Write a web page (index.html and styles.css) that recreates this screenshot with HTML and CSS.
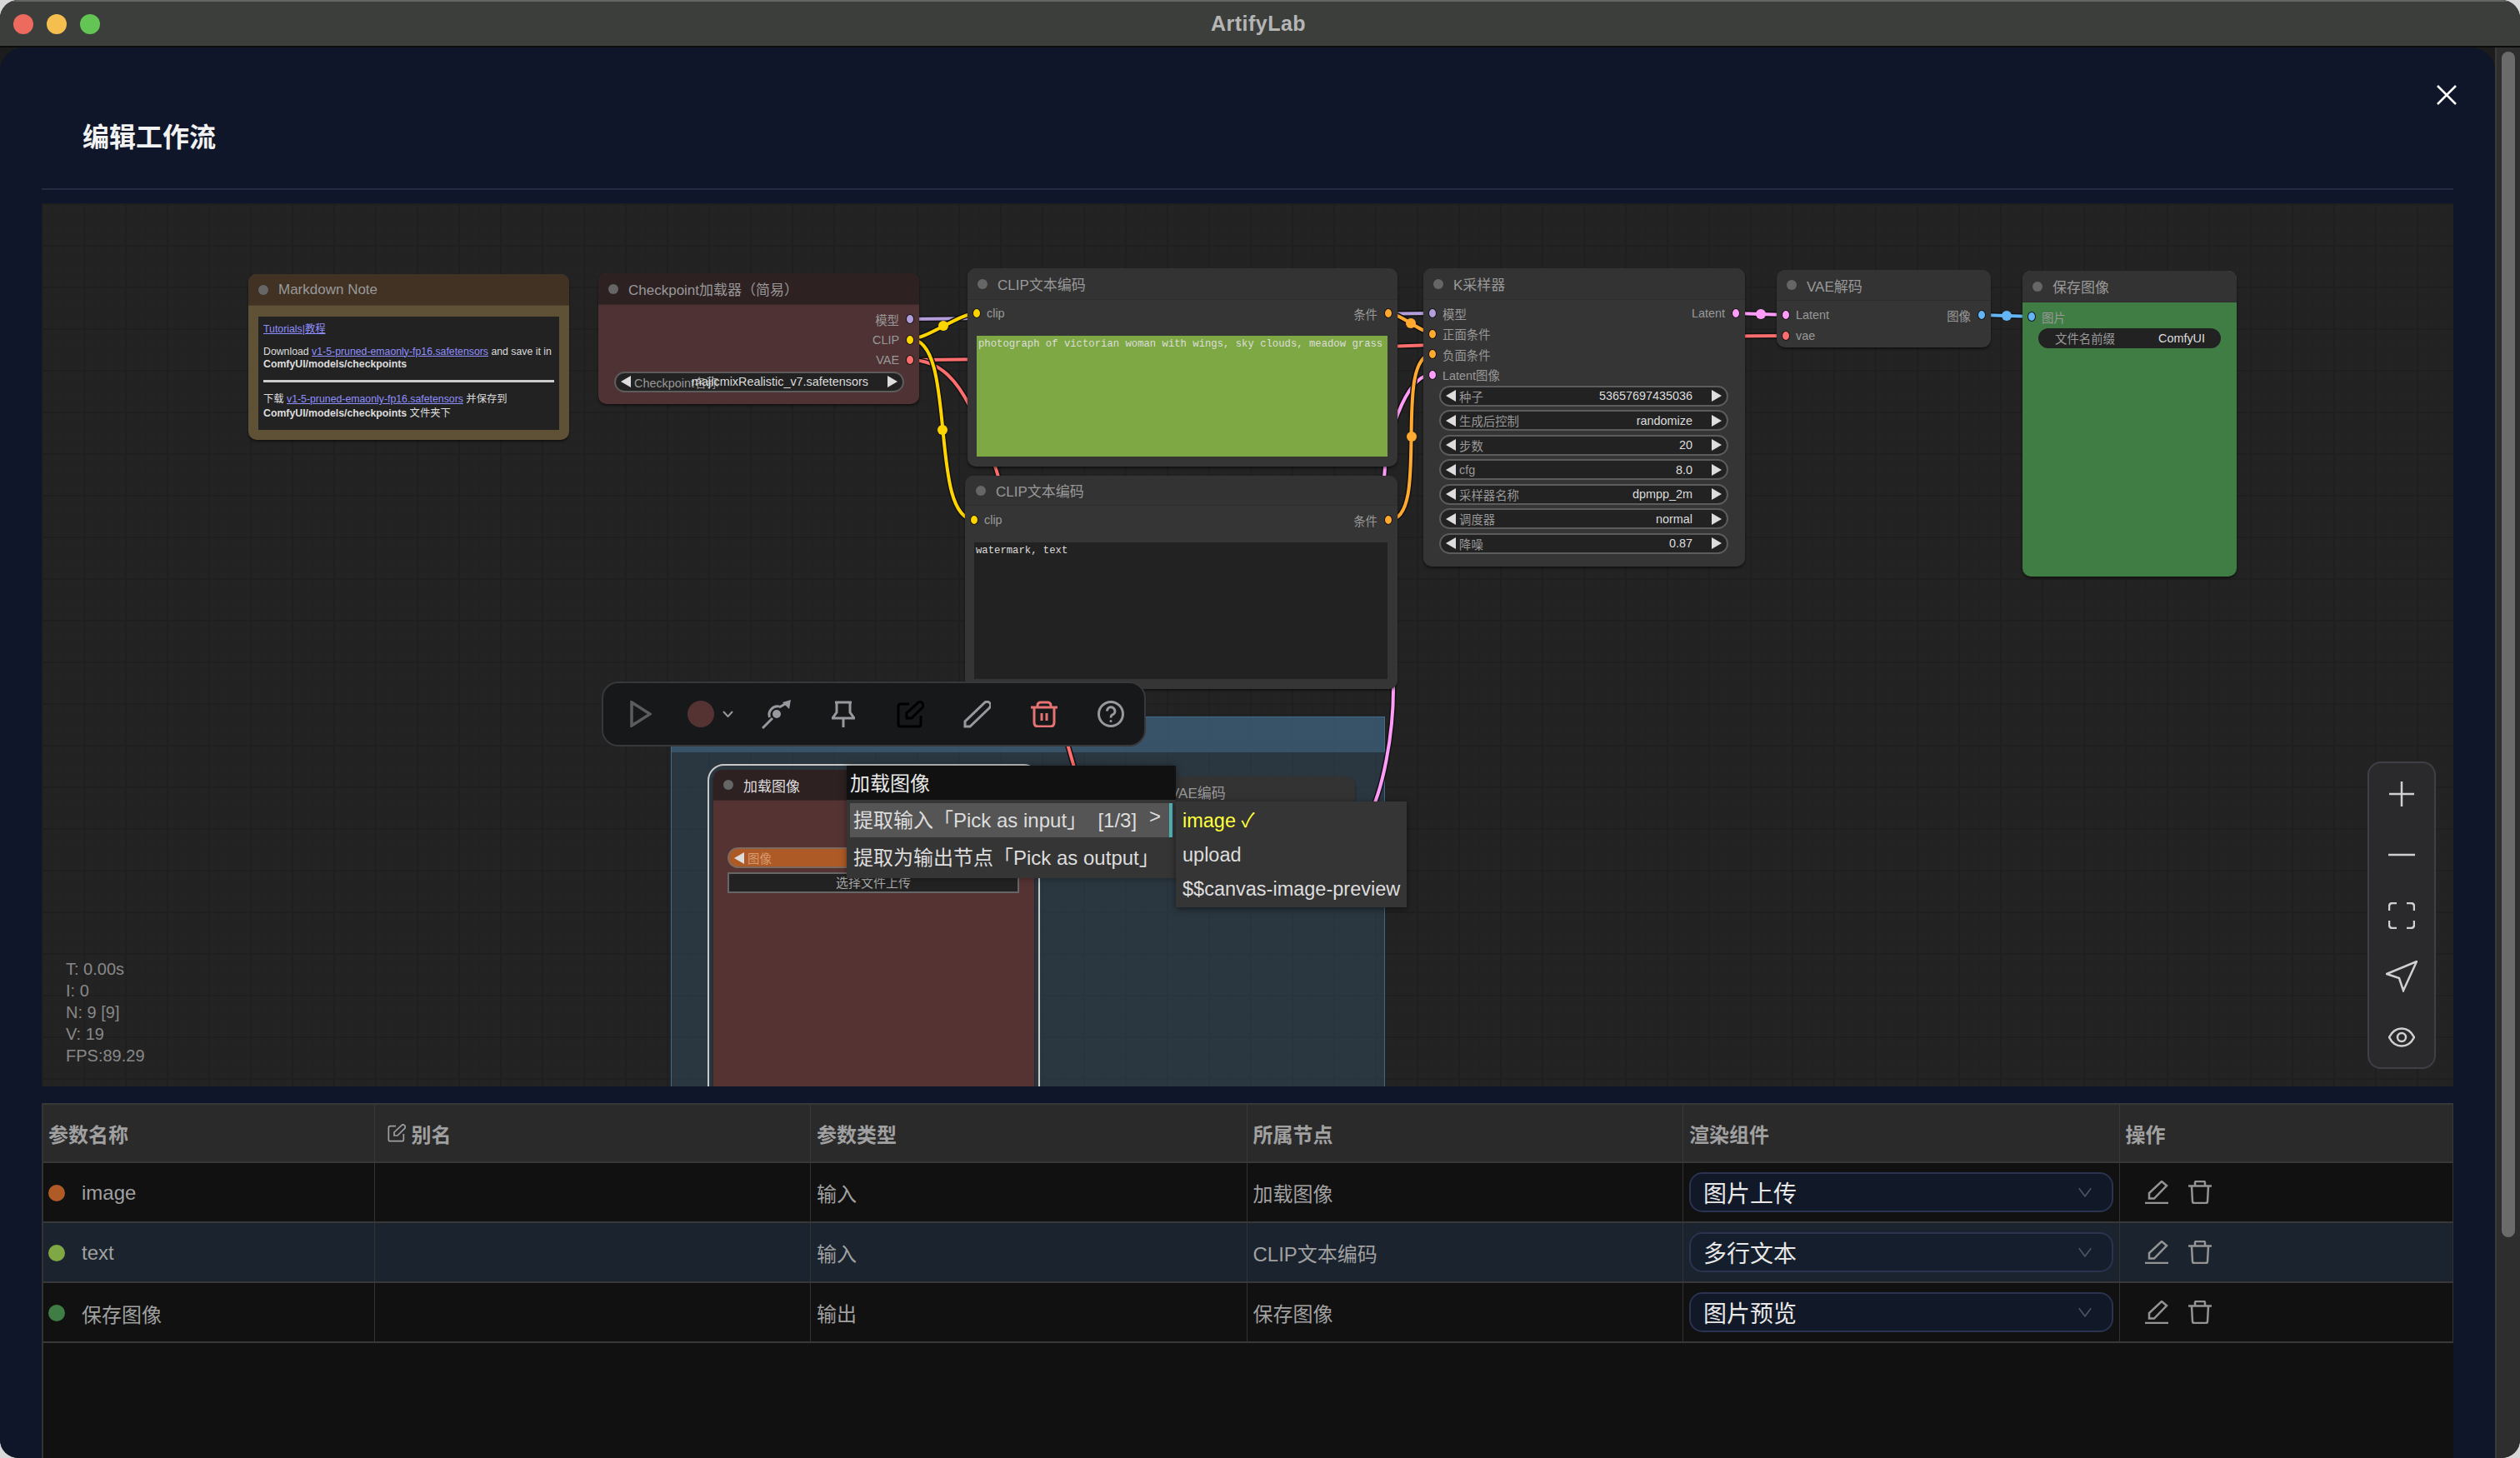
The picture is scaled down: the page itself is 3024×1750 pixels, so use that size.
FILE: index.html
```html
<!DOCTYPE html>
<html lang="zh-CN">
<head>
    <meta charset="UTF-8">
    <meta name="viewport" content="width=device-width, initial-scale=1.0">
    <title>ArtifyLab</title>
    <link rel="stylesheet" href="styles.css">
</head>
<body>
    <svg class="icon-defs" width="0" height="0">
        <symbol id="i-edit" viewBox="0 0 33 33">
            <path d="M15 4H5Q2 4 2 7V28Q2 31 5 31H26Q29 31 29 28V18"/>
            <path d="M12 21V15L26 2Q28 0 31 3Q33 6 31 8L18 21Z"/>
        </symbol>
        <symbol id="i-pen-line" viewBox="0 0 28 28">
            <path d="M5 21.5V15L20 1L26 6L11 21.5Z"/>
            <path d="M0 27H28"/>
        </symbol>
        <symbol id="i-bin" viewBox="0 0 28 28">
            <path d="M0 6.5H28"/>
            <path d="M8 6V2.5Q8 1 9.500 1H18.500Q20 1 20 2.500V6"/>
            <path d="M4 7L5 25Q5 27 7 27H21Q23 27 23 25L24 7"/>
        </symbol>
        <symbol id="i-chevron" viewBox="0 0 20 14">
            <path d="M1 1L10 13L19 1"/>
        </symbol>
    </svg>

    <div class="window">
        <div class="titlebar">
            <div class="lights">
                <span class="light light-red"></span>
                <span class="light light-yellow"></span>
                <span class="light light-green"></span>
            </div>
            <div class="app-name">ArtifyLab</div>
        </div>

        <div class="main">
            <div class="modal">
                <div class="modal-head">
                    <h2>编辑工作流</h2>
                </div>
                <svg class="close" viewBox="0 0 24 24"><path d="M1 1L23 23M23 1L1 23"/></svg>

                <div class="canvas">
                    <div class="group"><div class="group-head"></div></div>

                    <!-- links, in page coordinates -->
                    <svg class="links" width="2894" height="1060" viewBox="50 244 2894 1060">
                        <path class="wire-bg" d="M1092 383C1250 383 1560 376 1720 376"/>
                        <path class="wire w-model" d="M1092 383C1250 383 1560 376 1720 376"/>
                        <path class="wire-bg" d="M1092 432C1355 432 1881 403 2144 403"/>
                        <path class="wire w-vae" d="M1092 432C1355 432 1881 403 2144 403"/>
                        <path class="wire-bg" d="M1092 432C1130 432 1150 460 1165 490C1190 540 1200 570 1225 680C1250 790 1275 870 1300 960"/>
                        <path class="wire w-vae" d="M1092 432C1130 432 1150 460 1165 490C1190 540 1200 570 1225 680C1250 790 1275 870 1300 960"/>
                        <path class="wire-bg" d="M1092 407C1113 407 1151 376 1172 376"/>
                        <path class="wire w-clip" d="M1092 407C1113 407 1151 376 1172 376"/>
                        <path class="wire-bg" d="M1092 407C1150 407 1113 624 1170 624"/>
                        <path class="wire w-clip" d="M1092 407C1150 407 1113 624 1170 624"/>
                        <path class="wire-bg" d="M1666 376C1681 376 1705 400 1720 400"/>
                        <path class="wire w-cond" d="M1666 376C1681 376 1705 400 1720 400"/>
                        <path class="wire-bg" d="M1640 985C1660 950 1672 880 1672 827C1672 720 1655 640 1662 561C1668 510 1690 449 1720 449"/>
                        <path class="wire w-latent" d="M1640 985C1660 950 1672 880 1672 827C1672 720 1655 640 1662 561C1668 510 1690 449 1720 449"/>
                        <path class="wire-bg" d="M1667 624C1718 624 1669 425 1720 425"/>
                        <path class="wire w-cond" d="M1667 624C1718 624 1669 425 1720 425"/>
                        <path class="wire-bg" d="M2082 376L2144 378"/>
                        <path class="wire w-latent" d="M2082 376L2144 378"/>
                        <path class="wire-bg" d="M2377 378L2440 380"/>
                        <path class="wire w-image" d="M2377 378L2440 380"/>
                        <circle class="mid m-clip" cx="1132" cy="391" r="6"/>
                        <circle class="mid m-clip" cx="1131" cy="516" r="6"/>
                        <circle class="mid m-cond" cx="1693" cy="388" r="6"/>
                        <circle class="mid m-cond" cx="1694" cy="524" r="6"/>
                        <circle class="mid m-latent" cx="2113" cy="377" r="6"/>
                        <circle class="mid m-image" cx="2408" cy="379" r="6"/>
                    </svg>

                    <div class="node node-note">
                        <div class="node-title"><i></i>Markdown Note</div>
                        <div class="note-text">
                            <p><a>Tutorials</a><a class="plain">|</a><a>教程</a></p>
                            <p>Download <a>v1-5-pruned-emaonly-fp16.safetensors</a> and save it in<br><b>ComfyUI/models/checkpoints</b></p>
                            <hr>
                            <p class="tall">下载 <a>v1-5-pruned-emaonly-fp16.safetensors</a> 并保存到<br><b>ComfyUI/models/checkpoints</b> 文件夹下</p>
                        </div>
                    </div>

                    <div class="node node-ckpt">
                        <div class="node-title"><i></i>Checkpoint加载器（简易）</div>
                        <div class="node-body">
                            <div class="slot out">模型<u class="c-model"></u></div>
                            <div class="slot out">CLIP<u class="c-clip"></u></div>
                            <div class="slot out">VAE<u class="c-vae"></u></div>
                            <div class="widget ckpt-widget"><s class="al"></s><span class="overlap">Checkpoint名称</span><em>majicmixRealistic_v7.safetensors</em><s class="ar"></s></div>
                        </div>
                    </div>

                    <div class="node node-clip1">
                        <div class="node-title"><i></i>CLIP文本编码</div>
                        <div class="node-body">
                            <div class="slot"><u class="c-clip"></u>clip<span class="right">条件<u class="c-cond"></u></span></div>
                            <div class="prompt prompt-green">photograph of victorian woman with wings, sky clouds, meadow grass</div>
                        </div>
                    </div>

                    <div class="node node-clip2">
                        <div class="node-title"><i></i>CLIP文本编码</div>
                        <div class="node-body">
                            <div class="slot"><u class="c-clip"></u>clip<span class="right">条件<u class="c-cond"></u></span></div>
                            <div class="prompt prompt-dark">watermark, text</div>
                        </div>
                    </div>

                    <div class="node node-sampler">
                        <div class="node-title"><i></i>K采样器</div>
                        <div class="node-body">
                            <div class="slot"><u class="c-model"></u>模型<span class="right">Latent<u class="c-latent"></u></span></div>
                            <div class="slot"><u class="c-cond"></u>正面条件</div>
                            <div class="slot"><u class="c-cond"></u>负面条件</div>
                            <div class="slot"><u class="c-latent"></u>Latent图像</div>
                            <div class="widget-list">
                                <div class="widget"><s class="al"></s><span>种子</span><em>53657697435036</em><s class="ar"></s></div>
                                <div class="widget"><s class="al"></s><span>生成后控制</span><em>randomize</em><s class="ar"></s></div>
                                <div class="widget"><s class="al"></s><span>步数</span><em>20</em><s class="ar"></s></div>
                                <div class="widget"><s class="al"></s><span>cfg</span><em>8.0</em><s class="ar"></s></div>
                                <div class="widget"><s class="al"></s><span>采样器名称</span><em>dpmpp_2m</em><s class="ar"></s></div>
                                <div class="widget"><s class="al"></s><span>调度器</span><em>normal</em><s class="ar"></s></div>
                                <div class="widget"><s class="al"></s><span>降噪</span><em>0.87</em><s class="ar"></s></div>
                            </div>
                        </div>
                    </div>

                    <div class="node node-decode">
                        <div class="node-title"><i></i>VAE解码</div>
                        <div class="node-body">
                            <div class="slot"><u class="c-latent"></u>Latent<span class="right">图像<u class="c-image"></u></span></div>
                            <div class="slot"><u class="c-vae"></u>vae</div>
                        </div>
                    </div>

                    <div class="node node-save">
                        <div class="node-title"><i></i>保存图像</div>
                        <div class="node-body">
                            <div class="slot"><u class="c-image"></u>图片</div>
                            <div class="widget save-widget"><span>文件名前缀</span><em>ComfyUI</em></div>
                        </div>
                    </div>

                    <div class="node node-encode">
                        <div class="node-title"><i></i>VAE编码</div>
                    </div>

                    <div class="node-outline">
                        <div class="node node-load">
                            <div class="node-title"><i></i>加载图像</div>
                            <div class="node-body">
                                <div class="widget image-widget"><s class="al"></s><span>图像</span></div>
                                <div class="upload-btn">选择文件上传</div>
                            </div>
                        </div>
                    </div>

                    <div class="stats">
                        <div>T: 0.00s</div>
                        <div>I: 0</div>
                        <div>N: 9 [9]</div>
                        <div>V: 19</div>
                        <div>FPS:89.29</div>
                    </div>

                    <div class="toolbar">
                        <div class="tool tool-play"><svg width="26" height="32" viewBox="0 0 26 32" class="tool-off"><path d="M2 2L24 16L2 30Z"/></svg></div>
                        <div class="tool tool-color"><span class="swatch"></span><svg width="13" height="8" viewBox="0 0 13 8"><path d="M1 1L6.500 7L12 1"/></svg></div>
                        <div class="tool"><svg width="36" height="35" viewBox="0 0 36 35"><path d="M1 34L13 22"/><path d="M9.500 21A10 10 0 0 1 21 8"/><path d="M21 9L28 5"/><circle class="fill" cx="18" cy="17" r="5"/><path class="fill" d="M35 0L33 11L25 3Z"/></svg></div>
                        <div class="tool"><svg width="28" height="33" viewBox="0 0 28 33"><path d="M4 2H24M6 2V14L1 21H27L22 14V2M14 21V32"/></svg></div>
                        <div class="tool"><svg width="33" height="33"><use href="#i-edit"/></svg></div>
                        <div class="tool"><svg width="33" height="33" viewBox="0 0 33 33"><path d="M2 31V25L26 2Q29 0 32 3Q34 6 31 9L8 31Z"/></svg></div>
                        <div class="tool tool-red"><svg width="32" height="32" viewBox="0 0 32 32"><path d="M0 8H32M8 8V6Q8 2 12 2H20Q24 2 24 6V8M4 8V26Q4 31 9 31H23Q28 31 28 26V8M13 15V24M19 15V24"/></svg></div>
                        <div class="tool"><svg width="32" height="32" viewBox="0 0 32 32"><circle cx="16" cy="16" r="14.500"/><path d="M11.500 12.500A4.700 4.700 0 1 1 17.500 17Q16 18 16 20.500"/><circle class="fill" cx="16" cy="24.500" r="1.500"/></svg></div>
                    </div>

                    <div class="menu">
                        <div class="menu-title">加载图像</div>
                        <div class="menu-item active"><span class="keep-space">提取输入「Pick as input」  [1/3]</span><span class="more">&gt;</span></div>
                        <div class="menu-item">提取为输出节点「Pick as output」</div>
                    </div>
                    <div class="submenu">
                        <div class="sub-item checked">image ✓</div>
                        <div class="sub-item">upload</div>
                        <div class="sub-item">$$canvas-image-preview</div>
                    </div>

                    <div class="zoom-panel">
                        <svg width="30" height="30" viewBox="0 0 30 30"><path d="M0 15H30M15 0V30"/></svg>
                        <svg width="32" height="4" viewBox="0 0 32 4"><path d="M0 2H32"/></svg>
                        <svg width="32" height="32" viewBox="0 0 32 32"><path d="M10 1H5Q1 1 1 5V10M22 1H27Q31 1 31 5V10M1 22V27Q1 31 5 31H10M31 22V27Q31 31 27 31H22"/></svg>
                        <svg width="38" height="38" viewBox="0 0 38 38"><path d="M1 16L37 1L21 36L16 21Z"/></svg>
                        <svg width="32" height="26" viewBox="0 0 32 26"><path d="M1 13C8 -1 24 -1 31 13C24 27 8 27 1 13Z"/><circle cx="16" cy="13" r="5"/></svg>
                    </div>
                </div>

                <div class="table-wrap">
                    <table class="params">
                        <colgroup>
                            <col class="col-name"><col class="col-wide"><col class="col-wide"><col class="col-wide"><col class="col-wide"><col>
                        </colgroup>
                        <thead>
                            <tr>
                                <th>参数名称</th>
                                <th><span class="alias"><svg width="22" height="22"><use href="#i-edit"/></svg>别名</span></th>
                                <th>参数类型</th>
                                <th>所属节点</th>
                                <th>渲染组件</th>
                                <th>操作</th>
                            </tr>
                        </thead>
                        <tbody>
                            <tr>
                                <td><span class="param"><span class="dot dot-orange"></span>image</span></td>
                                <td></td>
                                <td>输入</td>
                                <td>加载图像</td>
                                <td><div class="select"><span>图片上传</span><svg width="16" height="14"><use href="#i-chevron"/></svg></div></td>
                                <td><div class="actions"><svg width="28" height="28"><use href="#i-pen-line"/></svg><svg width="28" height="28"><use href="#i-bin"/></svg></div></td>
                            </tr>
                            <tr class="row-hover">
                                <td><span class="param"><span class="dot dot-lime"></span>text</span></td>
                                <td></td>
                                <td>输入</td>
                                <td>CLIP文本编码</td>
                                <td><div class="select"><span>多行文本</span><svg width="16" height="14"><use href="#i-chevron"/></svg></div></td>
                                <td><div class="actions"><svg width="28" height="28"><use href="#i-pen-line"/></svg><svg width="28" height="28"><use href="#i-bin"/></svg></div></td>
                            </tr>
                            <tr>
                                <td><span class="param"><span class="dot dot-green"></span>保存图像</span></td>
                                <td></td>
                                <td>输出</td>
                                <td>保存图像</td>
                                <td><div class="select"><span>图片预览</span><svg width="16" height="14"><use href="#i-chevron"/></svg></div></td>
                                <td><div class="actions"><svg width="28" height="28"><use href="#i-pen-line"/></svg><svg width="28" height="28"><use href="#i-bin"/></svg></div></td>
                            </tr>
                        </tbody>
                    </table>
                </div>
            </div>

            <div class="scrollbar"><div class="thumb"></div></div>
        </div>
    </div>
</body>
</html>
```

FILE: styles.css
```css
* {
    box-sizing: border-box;
}
body {
    margin: 0;
    background: #d8d8d8;
    font-family: "Liberation Sans", "Noto Sans CJK SC", Arial, sans-serif;
    overflow: hidden;
}
.icon-defs {
    position: absolute;
}
symbol path {
    fill: none;
    stroke: currentColor;
}

/* window chrome */
.window {
    width: 3024px;
    height: 1750px;
    display: flex;
    flex-direction: column;
    background: #1c1c1c;
    border-radius: 22px;
    overflow: hidden;
}
.titlebar {
    height: 57px;
    flex: none;
    display: flex;
    align-items: center;
    position: relative;
    background: #3c3e3c;
    border-top: 2px solid #646464;
    border-bottom: 2px solid #0c0c0c;
}
.lights {
    display: flex;
    gap: 16px;
    padding-left: 16px;
}
.light {
    width: 24px;
    height: 24px;
    border-radius: 50%;
}
.light-red { background: #ed6a5e; }
.light-yellow { background: #f5bf4f; }
.light-green { background: #62c554; }
.app-name {
    position: absolute;
    left: -4px;
    right: 0;
    text-align: center;
    font-size: 25px;
    font-weight: 700;
    letter-spacing: 0.5px;
    color: #b5b5b5;
}
.main {
    flex: 1;
    display: flex;
    min-height: 0;
}
.modal {
    width: 2994px;
    position: relative;
    display: flex;
    flex-direction: column;
    padding-left: 50px;
    padding-right: 50px;
    background: #0f1629;
    border-radius: 28px 28px 0 0;
}
.modal-head {
    height: 171px;
    flex: none;
    display: flex;
    align-items: center;
    padding: 41px 0 0 49px;
    border-bottom: 2px solid #232b42;
}
.modal-head h2 {
    margin: 0;
    font-size: 32px;
    font-weight: 600;
    color: #f2f2f2;
}
.close {
    position: absolute;
    top: 45px;
    right: 46px;
    width: 24px;
    height: 24px;
    fill: none;
    stroke: #fff;
    stroke-width: 2.5;
}
.scrollbar {
    flex: 1;
    background: #2e2e2e;
    border-left: 2px solid #3a3a3a;
    padding: 5px 6px 0 6px;
}
.thumb {
    height: 1423px;
    background: #6b6b6b;
    border-radius: 8px;
}

/* canvas */
.canvas {
    position: relative;
    flex: none;
    height: 1060px;
    margin-top: 16px;
    overflow: hidden;
    background-color: #232323;
    background-image:
        linear-gradient(#1f1f1f 2px, transparent 2px),
        linear-gradient(90deg, #1f1f1f 2px, transparent 2px),
        linear-gradient(#212121 1px, transparent 1px),
        linear-gradient(90deg, #212121 1px, transparent 1px);
    background-size: 50px 50px, 50px 50px, 12.500px 12.500px, 12.500px 12.500px;
}
.group {
    position: absolute;
    left: 755px;
    top: 616px;
    width: 857px;
    height: 500px;
    background: rgba(51, 75, 93, 0.5);
    border: 1px solid #3f6a8a;
}
.group-head {
    height: 42px;
    background: rgba(69, 109, 141, 0.5);
}
.links {
    position: absolute;
    left: 0;
    top: 0;
}
.wire, .wire-bg {
    fill: none;
}
.wire { stroke-width: 4; }
.wire-bg { stroke: #111; stroke-width: 7; }
.w-model { stroke: #b39ddb; }
.w-clip { stroke: #ffd500; }
.w-vae { stroke: #ff6e6e; }
.w-cond { stroke: #ffa931; }
.w-latent { stroke: #ff9cf9; }
.w-image { stroke: #64b5f6; }
.m-clip { fill: #ffd500; }
.m-cond { fill: #ffa931; }
.m-latent { fill: #ff9cf9; }
.m-image { fill: #64b5f6; }

/* nodes */
.node {
    position: absolute;
    display: flex;
    flex-direction: column;
    background: #353535;
    border-radius: 10px;
    box-shadow: 0 2px 3px rgba(0, 0, 0, 0.5);
    font-size: 14.400px;
    color: #999;
}
.node-title {
    height: 38px;
    flex: none;
    display: flex;
    align-items: center;
    gap: 12px;
    padding-left: 12px;
    background: #333;
    border-bottom: 1px solid #2e2e2e;
    border-radius: 10px 10px 0 0;
    font-size: 17px;
    color: #999;
    white-space: nowrap;
}
.node-title i {
    width: 12px;
    height: 12px;
    border-radius: 50%;
    background: #666;
}
.node-body {
    flex: 1;
    padding-top: 4px;
}
.slot {
    height: 24.500px;
    display: flex;
    align-items: center;
    gap: 7px;
    padding: 0 6px;
    white-space: nowrap;
}
.slot.out {
    justify-content: flex-end;
    gap: 8px;
}
.slot .right {
    margin-left: auto;
    display: flex;
    align-items: center;
    gap: 8px;
}
.slot u {
    width: 10px;
    height: 12px;
    flex: none;
    border-radius: 50%;
    border: 1px solid #111;
}
.c-model { background: #b39ddb; }
.c-clip { background: #ffd500; }
.c-vae { background: #ff6e6e; }
.c-cond { background: #ffa931; }
.c-latent { background: #ff9cf9; }
.c-image { background: #64b5f6; }

.widget {
    height: 25px;
    display: flex;
    align-items: center;
    padding: 0 6px;
    background: #222;
    border: 2px solid #5c5c5c;
    border-radius: 13px;
    white-space: nowrap;
}
.widget span { color: #999; margin-left: 4px; }
.widget em {
    margin-left: auto;
    font-style: normal;
    color: #ddd;
}
.widget .al, .widget .ar {
    width: 0;
    height: 0;
    flex: none;
    border-top: 7px solid transparent;
    border-bottom: 7px solid transparent;
}
.widget .al { border-right: 12px solid #ddd; }
.widget .ar { border-left: 12px solid #ddd; margin-left: 23px; }
.widget-list {
    display: flex;
    flex-direction: column;
    gap: 4.500px;
    margin: 0.500px 20px 0 19px;
}

.node-note {
    left: 248px;
    top: 85px;
    width: 385px;
    height: 199px;
    background: #5f5136;
}
.node-note .node-title {
    background: #413224;
    border-bottom-color: #4c3e2b;
}
.note-text {
    margin: 13px 12px 0;
    height: 136px;
    padding: 8px 6px 0;
    background: #222;
    font-size: 12.300px;
    line-height: 15px;
    color: #ddd;
    white-space: nowrap;
}
.note-text p {
    margin: 0 0 11.500px;
}
.note-text p.tall {
    line-height: 16.500px;
}
.note-text a {
    color: #8f8fff;
    text-decoration: underline;
}
.note-text a.plain {
    text-decoration: none;
}
.note-text hr {
    height: 3px;
    margin: 0 0 12px;
    border: none;
    background: #ccc;
}
.node-ckpt {
    left: 668px;
    top: 84px;
    width: 385px;
    height: 157px;
    background: #4f3334;
}
.node-ckpt .node-title,
.node-load .node-title {
    background: #2e2122;
    border-bottom-color: #3a2828;
}
.node-ckpt .node-body { padding-top: 5px; }
.ckpt-widget {
    margin: 1px 18px 0 19px;
}
.ckpt-widget .overlap { margin-right: -60px; }
.node-clip1 {
    left: 1111px;
    top: 78px;
    width: 516px;
    height: 238px;
}
.node-clip2 {
    left: 1108px;
    top: 327px;
    width: 519px;
    height: 256px;
}
.node-clip2 .node-title { height: 36px; padding-left: 13px; }
.node-clip2 .node-body { padding-top: 5px; }
.prompt {
    margin: 14.500px 12px 0 11px;
    padding: 3px 2px;
    font-family: "Liberation Mono", "Courier New", monospace;
    font-size: 12.250px;
    line-height: 14px;
    color: #ddd;
    white-space: nowrap;
}
.prompt-green {
    height: 145px;
    background: #7ea843;
}
.prompt-dark {
    height: 164px;
    background: #222;
}
.node-sampler {
    left: 1658px;
    top: 78px;
    width: 386px;
    height: 358px;
}
.node-decode {
    left: 2082px;
    top: 80px;
    width: 257px;
    height: 93px;
}
.node-decode .node-title { height: 37px; }
.node-decode .node-body { padding-top: 5px; }
.node-save {
    left: 2377px;
    top: 81px;
    width: 257px;
    height: 367px;
    background: #3f7d45;
}
.node-save .node-body { padding-top: 5px; }
.save-widget {
    height: 24px;
    margin: 1px 19px 0;
    padding: 0 17px 0 14px;
    border-color: #222;
}
.node-encode {
    left: 1318px;
    top: 688px;
    width: 258px;
    height: 93px;
}
.node-outline {
    position: absolute;
    left: 799px;
    top: 673px;
    width: 399px;
    height: 500px;
    padding: 5px;
    border: 2px solid #c8c8c8;
    border-radius: 20px;
}
.node-load {
    position: static;
    height: 100%;
    background: #533;
}
.node-load .node-title { color: #ddd; height: 37px; }
.node-load .node-body { padding: 56px 18px 0 17px; }
.image-widget {
    background: #ae5a26;
    border-color: #7d6a5c;
    margin-bottom: 5px;
}
.image-widget span { color: #d89a70; }
.upload-btn {
    height: 25px;
    background: #222;
    border: 2px solid #666;
    text-align: center;
    font-size: 15px;
    line-height: 22px;
    color: #aaa;
}
.stats {
    position: absolute;
    left: 29px;
    top: 906px;
    font-size: 20px;
    line-height: 26px;
    color: #888;
}

/* floating toolbar */
.toolbar {
    position: absolute;
    left: 672px;
    top: 574px;
    width: 653px;
    height: 78px;
    display: flex;
    padding-left: 8px;
    background: #17181a;
    border: 2px solid #37383b;
    border-radius: 20px;
}
.tool {
    flex: 1;
    display: flex;
    align-items: center;
    justify-content: center;
    gap: 10px;
}
.tool svg {
    fill: none;
    stroke: #98989e;
    stroke-width: 3;
}
.tool svg .fill {
    fill: #98989e;
    stroke: none;
}
.tool svg.tool-off {
    stroke: #5c5c60;
    stroke-width: 3.500;
    margin-right: 6px;
}
.tool-red svg { stroke: #e57373; }
.swatch {
    width: 32px;
    height: 32px;
    border-radius: 50%;
    background: #533;
}
.tool-color svg {
    stroke-width: 2;
}

/* context menu */
.menu {
    position: absolute;
    left: 966px;
    top: 675px;
    width: 395px;
    height: 135px;
    background: #353535;
    box-shadow: 0 0 8px rgba(0, 0, 0, 0.4);
    font-size: 24px;
    color: #ddd;
    white-space: nowrap;
}
.keep-space {
    white-space: pre;
}
.menu-title {
    height: 41px;
    padding-left: 4px;
    margin-bottom: 4px;
    background: #111;
    line-height: 44px;
    color: #e8e8e8;
}
.menu-item {
    height: 41px;
    display: flex;
    justify-content: space-between;
    margin: 0 4px;
    padding: 0 10px 0 4px;
    line-height: 41px;
}
.menu-item.active {
    background: #555;
    border-right: 4px solid #4fb3b8;
}
.menu-item .more {
    line-height: 32px;
}
.menu-item + .menu-item {
    margin-top: 4px;
}
.submenu {
    position: absolute;
    left: 1361px;
    top: 718px;
    width: 277px;
    height: 127px;
    padding: 3px 0 0 8px;
    background: #353535;
    box-shadow: 0 2px 8px rgba(0, 0, 0, 0.5);
    font-size: 23.500px;
    color: #ddd;
    white-space: nowrap;
}
.sub-item {
    height: 41px;
    line-height: 41px;
}
.sub-item.checked {
    color: #ffff3c;
}

/* zoom controls */
.zoom-panel {
    position: absolute;
    left: 2791px;
    top: 670px;
    width: 82px;
    height: 369px;
    display: grid;
    grid-auto-rows: 1fr;
    place-items: center;
    background: #2a2a2c;
    border: 2px solid #3f3f46;
    border-radius: 16px;
}
.zoom-panel svg {
    fill: none;
    stroke: #d0d0d0;
    stroke-width: 2.500;
}

/* parameter table */
.table-wrap {
    flex: 1;
    margin-top: 20px;
    background: #111;
    border-left: 2px solid #333;
}
.params {
    width: 100%;
    table-layout: fixed;
    border-collapse: collapse;
    font-size: 24px;
    color: #a0a0a0;
}
.col-name { width: 397px; }
.col-wide { width: 523.500px; }
.params th {
    height: 70px;
    padding: 0 7px;
    text-align: left;
    font-weight: 600;
    background: #2a2a2b;
    border: 2px solid #383838;
    border-left-width: 1px;
    border-right-width: 1px;
}
.params th:first-child, .params td:first-child { border-left: none; padding-left: 6px; }
.params td {
    height: 72px;
    padding: 0 7px;
    border-bottom: 2px solid #383838;
    border-left: 1px solid #333;
    border-right: 1px solid #333;
}
.row-hover td {
    background: #1a232e;
}
.alias {
    display: flex;
    align-items: center;
    gap: 7px;
    padding-left: 8px;
}
.alias svg {
    color: #a0a0a0;
    stroke-width: 2.500;
}
.param {
    display: flex;
    align-items: center;
    gap: 20px;
    padding-top: 2px;
}
.dot {
    width: 20px;
    height: 20px;
    border-radius: 50%;
}
.dot-orange { background: #b05a26; }
.dot-lime { background: #7fa844; }
.dot-green { background: #3f7d45; }
.select {
    height: 48px;
    display: flex;
    align-items: center;
    justify-content: space-between;
    padding: 0 24px 0 15px;
    background: #111827;
    border: 2px solid #2a3350;
    border-radius: 16px;
    font-size: 28px;
    color: #e8e8e8;
}
.select svg {
    color: #4b5563;
    stroke-width: 2;
}
.row-hover .select {
    background: #151e2c;
}
.actions {
    display: flex;
    gap: 24px;
    padding-left: 23px;
    color: #949494;
}
.actions svg {
    stroke-width: 2.500;
}
```
